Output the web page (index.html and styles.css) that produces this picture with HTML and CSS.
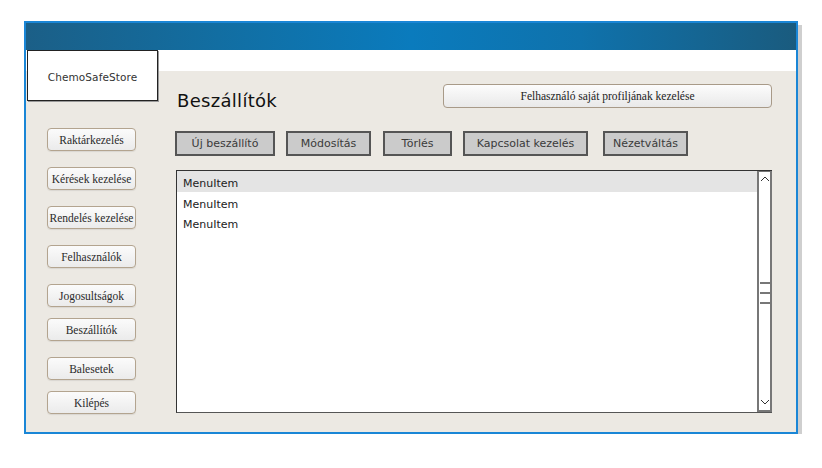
FILE: index.html
```html
<!DOCTYPE html>
<html lang="hu">
<head>
<meta charset="utf-8">
<title>Beszállítók</title>
<link rel="stylesheet" href="styles.css">
</head>
<body>
<div class="window">
  <div class="titlebar"></div>
  <div class="main">
    <aside class="sidebar">
      <div class="logo">ChemoSafeStore</div>
      <nav class="nav">
        <button class="navbtn">Raktárkezelés</button>
        <button class="navbtn">Kérések kezelése</button>
        <button class="navbtn">Rendelés kezelése</button>
        <button class="navbtn">Felhasználók</button>
        <button class="navbtn">Jogosultságok</button>
        <button class="navbtn tight">Beszállítók</button>
        <button class="navbtn">Balesetek</button>
        <button class="navbtn tight">Kilépés</button>
      </nav>
    </aside>
    <section class="content">
      <div class="header">
        <h1 class="title">Beszállítók</h1>
        <button class="profile">Felhasználó saját profiljának kezelése</button>
      </div>
      <div class="toolbar">
        <button class="tool w-new">Új beszállító</button>
        <button class="tool w-mod">Módosítás</button>
        <button class="tool w-del">Törlés</button>
        <button class="tool w-rel">Kapcsolat kezelés</button>
        <button class="tool w-view">Nézetváltás</button>
      </div>
      <div class="listbox">
        <ul class="items">
          <li class="item selected">MenuItem</li>
          <li class="item">MenuItem</li>
          <li class="item">MenuItem</li>
        </ul>
        <div class="scrollbar">
          <svg class="arrow" width="10" height="7" viewBox="0 0 10 7"><path d="M1 6 L5 2 L9 6" fill="none" stroke="#333" stroke-width="1"/></svg>
          <div class="grip"><span></span><span></span><span></span></div>
          <svg class="arrow" width="10" height="7" viewBox="0 0 10 7"><path d="M1 1 L5 5 L9 1" fill="none" stroke="#333" stroke-width="1"/></svg>
        </div>
      </div>
    </section>
  </div>
</div>
</body>
</html>
```

FILE: styles.css
```css
* { box-sizing: border-box; }
html, body { margin: 0; padding: 0; background: #ffffff; }
body { padding: 21px 0 0 24px; font-family: "DejaVu Sans", sans-serif; }

.window {
  width: 774px;
  height: 413px;
  border: 2px solid #1a86d6;
  box-shadow: 4px 4px 0 #cfcfcf;
  display: flex;
  flex-direction: column;
  background: #ece9e3;
}

.titlebar {
  height: 27px;
  flex: none;
  background: linear-gradient(90deg, #1b5f87 0%, #126ea2 25%, #0a7bbd 50%, #0f72ac 72%, #1a5b7e 100%);
}

.main {
  flex: 1;
  display: flex;
  background: linear-gradient(#ffffff 0, #ffffff 21px, #ece9e3 21px);
}

.sidebar {
  width: 149px;
  flex: none;
  display: flex;
  flex-direction: column;
}

.logo {
  margin-left: 1px;
  width: 131px;
  height: 51px;
  padding-top: 2px;
  border: 1px solid #222;
  background: #fff;
  box-shadow: 1px 1px 0 #999;
  display: flex;
  align-items: center;
  justify-content: center;
  font-size: 10.5px;
  color: #333;
  letter-spacing: 0.1px;
}

.nav {
  margin: 27px 0 0 21px;
  display: flex;
  flex-direction: column;
  gap: 16px;
}

.navbtn {
  width: 89px;
  height: 23px;
  padding: 0;
  border: 1px solid #b3a48f;
  border-radius: 4px;
  background: linear-gradient(#fbfbfb, #ebebeb);
  box-shadow: 0 1px 1px rgba(0,0,0,0.08);
  font-family: "Liberation Serif", serif;
  font-size: 11.5px;
  color: #2a2a2a;
  white-space: nowrap;
}
.navbtn.tight { margin-top: -5px; }

.content {
  flex: 1;
  padding: 34px 24px 0 0;
  display: flex;
  flex-direction: column;
}

.header {
  height: 24px;
  display: flex;
  align-items: center;
  justify-content: space-between;
}

.title {
  margin: 8px 0 0 2px;
  font-weight: normal;
  font-size: 18px;
  color: #111;
  letter-spacing: 0.3px;
}

.profile {
  width: 329px;
  height: 24px;
  padding: 0;
  border: 1px solid #a89a88;
  border-radius: 4px;
  background: linear-gradient(#fcfcfc, #e9e9e9);
  font-family: "Liberation Serif", serif;
  font-size: 11.5px;
  color: #222;
}

.toolbar {
  margin-top: 23px;
  display: flex;
  align-items: center;
  gap: 11px;
}

.tool {
  height: 25px;
  padding: 0;
  border: 2px solid #555;
  background: #cbcbcb;
  font-family: "DejaVu Sans", sans-serif;
  font-size: 11px;
  color: #3a3a3a;
}
.w-new { width: 100px; }
.w-mod { width: 85px; }
.w-del { width: 69px; margin-left: 1px; }
.w-rel { width: 125px; }
.w-view { width: 85px; margin-left: 4px; }

.listbox {
  margin: 14px 0 0 1px;
  height: 243px;
  display: flex;
  border: 1px solid #333;
  border-right: none;
  border-bottom-color: #555;
  background: #fff;
}

.items {
  flex: 1;
  margin: 0;
  padding: 0;
  list-style: none;
}

.item {
  height: 20px;
  padding: 6px 0 0 6px;
  font-size: 11px;
  color: #222;
}
.item.selected { height: 21px; background: #e4e4e4; }

.scrollbar {
  width: 15px;
  flex: none;
  border: 2px solid #777;
  border-top-width: 1px;
  background: #fff;
  display: flex;
  flex-direction: column;
  align-items: center;
  justify-content: space-between;
  padding: 3px 0 4px;
}

.grip {
  display: flex;
  flex-direction: column;
  gap: 8px;
  margin-top: 4px;
}
.grip span {
  display: block;
  width: 10px;
  height: 2px;
  background: #777;
}
```
